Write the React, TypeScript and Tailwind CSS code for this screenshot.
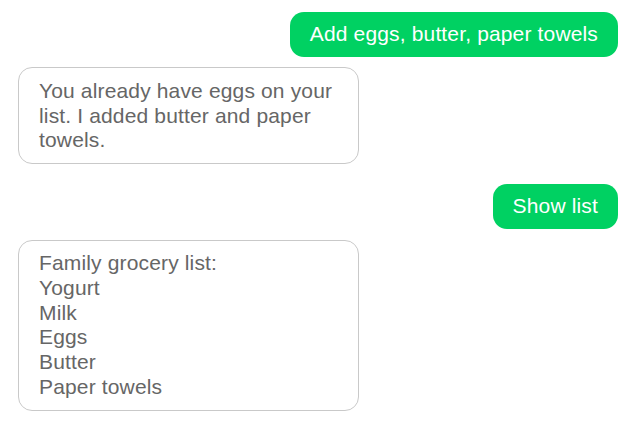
export default function App() {
  return (
    <div
      className="w-[642px] h-[423px] bg-white overflow-hidden pt-[12px] pl-[18px] pr-[24px] flex flex-col text-[21px] leading-[24.8px] tracking-[0.15px]"
      style={{ fontFamily: '"Liberation Sans", Arial, sans-serif' }}
    >
      {/* user */}
      <div className="flex justify-end">
        <div className="bg-[#00d162] text-white rounded-[14px] px-5 py-[10px]">
          Add eggs, butter, paper towels
        </div>
      </div>

      {/* bot */}
      <div className="mt-[10px] w-[341px] border border-[#c9c9c9] rounded-[14px] px-5 pt-[11px] pb-[10px] text-[#666666]">
        You already have eggs on your list. I added butter and paper towels.
      </div>

      {/* user */}
      <div className="mt-[20px] flex justify-end">
        <div className="bg-[#00d162] text-white rounded-[14px] px-5 py-[10px]">
          Show list
        </div>
      </div>

      {/* bot */}
      <div className="mt-[11px] w-[341px] border border-[#c9c9c9] rounded-[14px] px-5 py-[10px] text-[#666666] flex flex-col">
        <span>Family grocery list:</span>
        <span>Yogurt</span>
        <span>Milk</span>
        <span>Eggs</span>
        <span>Butter</span>
        <span>Paper towels</span>
      </div>
    </div>
  )
}
